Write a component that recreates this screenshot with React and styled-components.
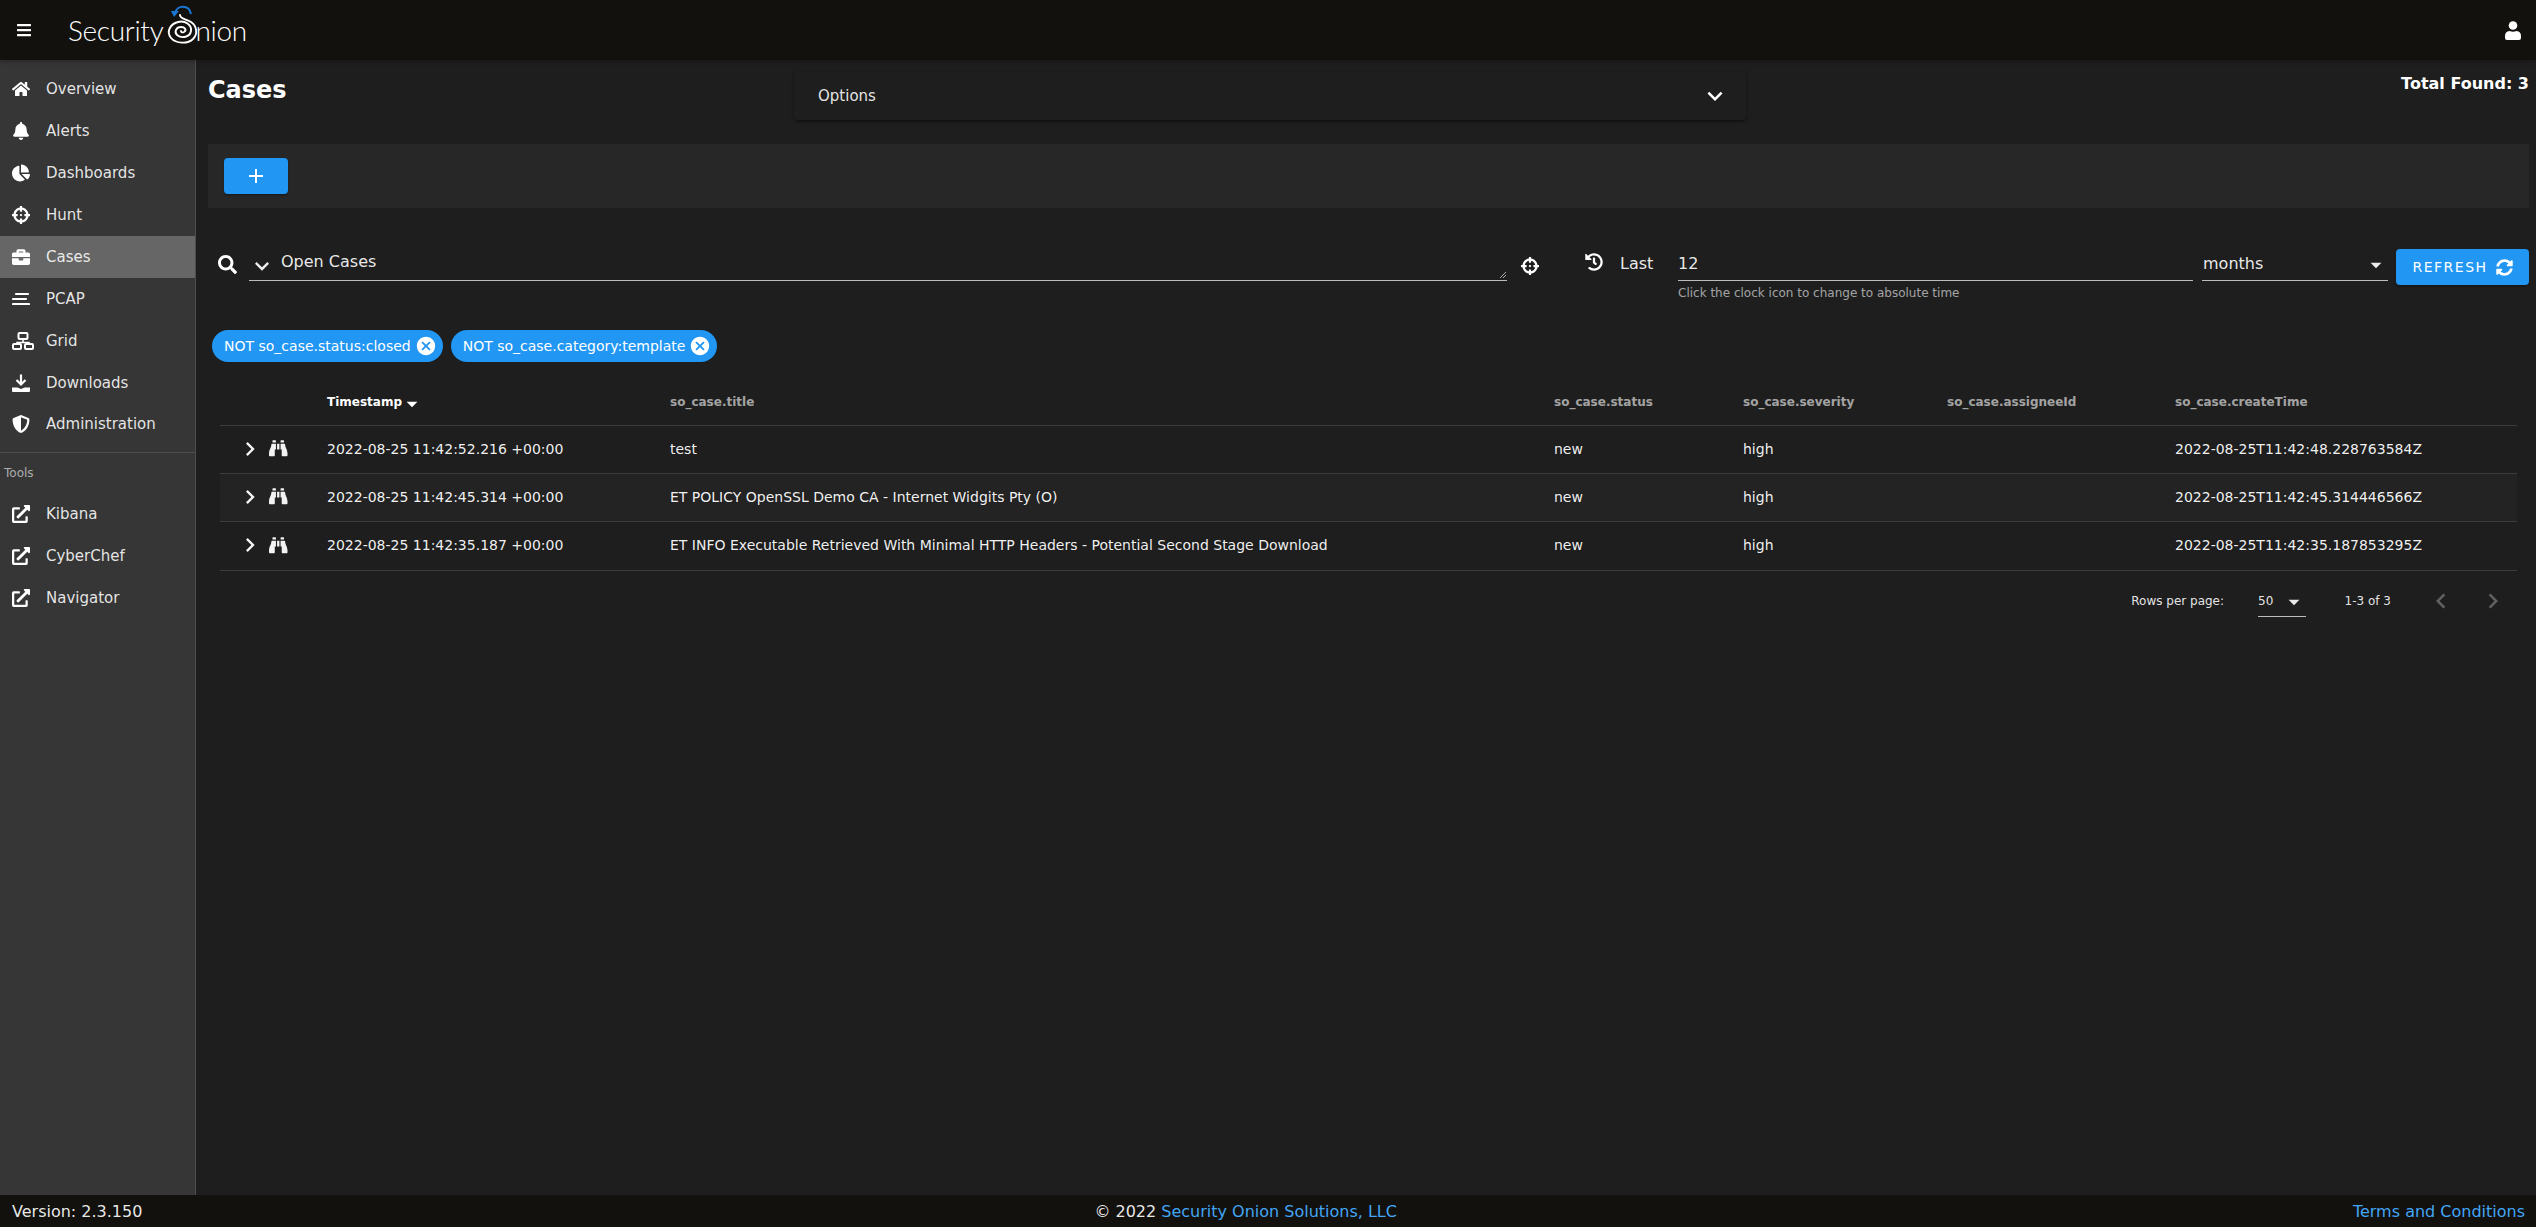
import React from 'react';
import styled, { createGlobalStyle } from 'styled-components';
import {
  FaBars, FaHome, FaBell, FaChartPie, FaCrosshairs, FaBriefcase, FaShieldAlt,
  FaExternalLinkAlt, FaSearch, FaHistory, FaSyncAlt, FaBinoculars
} from 'react-icons/fa';
import { MdAdd, MdArrowDropDown, MdCancel, MdKeyboardArrowDown, MdKeyboardArrowRight, MdKeyboardArrowLeft } from 'react-icons/md';

const GlobalStyle = createGlobalStyle`
  html, body {
    margin: 0;
    height: 100%;
    background: #1e1e1e;
    color: #fff;
    font-family: "DejaVu Sans", sans-serif;
  }
  * { box-sizing: border-box; }
`;

const Page = styled.div`
  display: grid;
  grid-template-rows: 60px 1fr 32px;
  height: 100vh;
  overflow: hidden;
`;

const Header = styled.header`
  display: flex;
  align-items: center;
  justify-content: space-between;
  padding: 0 15px 0 16px;
  background: #12110d;
  box-shadow: 0 2px 4px rgba(0, 0, 0, 0.25);
  z-index: 1;
`;

const Brand = styled.div`
  display: flex;
  align-items: center;
  gap: 36px;
`;

const Logo = styled.div`
  display: flex;
  align-items: flex-start;
  height: 50px;
  margin-top: -2px;
  font-family: Lato, sans-serif;
  font-weight: 300;
  font-size: 28px;
  letter-spacing: -0.3px;
  line-height: 52px;
  color: #fff;
  svg { margin: 0 -5px 0 3px; }
`;

const Body = styled.div`
  display: flex;
  min-height: 0;
`;

const Sidebar = styled.nav`
  width: 196px;
  flex: none;
  padding-top: 8px;
  background: #363636;
  border-right: 1px solid #4d4d4d;
`;

const NavItem = styled.div`
  display: flex;
  align-items: center;
  height: ${p => p.$short ? 40 : 42}px;
  padding-left: 12px;
  font-size: 15px;
  color: rgba(255, 255, 255, 0.88);
  background: ${p => p.$active ? '#666' : 'transparent'};
`;

const NavIcon = styled.span`
  display: flex;
  align-items: center;
  width: 34px;
  font-size: 18px;
  color: #fff;
`;

const NavDivider = styled.hr`
  margin: 8px 0 0;
  border: 0;
  border-top: 1px solid #4d4d4d;
`;

const NavHeading = styled.div`
  padding: 13px 0 13px 4px;
  font-size: 12px;
  line-height: 14px;
  color: rgba(255, 255, 255, 0.6);
`;

const Main = styled.main`
  flex: 1;
  min-width: 0;
  padding: 0 7px 0 12px;
`;

const TitleRow = styled.div`
  display: grid;
  grid-template-columns: 586px 952px 1fr;
  height: 84px;
`;

const Title = styled.h1`
  margin: 14px 0 0;
  font-size: 24px;
  line-height: 32px;
  font-weight: 700;
`;

const OptionsPanel = styled.div`
  display: flex;
  align-items: center;
  justify-content: space-between;
  height: 48px;
  margin-top: 12px;
  padding: 0 16px 0 24px;
  font-size: 15px;
  border-radius: 4px;
  background: #1e1e1e;
  color: rgba(255, 255, 255, 0.9);
  box-shadow: 0 2px 3px -1px rgba(0, 0, 0, 0.5), 0 1px 4px 0 rgba(0, 0, 0, 0.2);
  svg { font-size: 30px; color: #fff; }
`;

const Total = styled.div`
  margin-top: 14px;
  text-align: right;
  font-size: 16px;
  line-height: 20px;
  font-weight: 700;
`;

const Toolbar = styled.div`
  display: flex;
  align-items: center;
  height: 64px;
  padding-left: 16px;
  background: #272727;
`;

const BlueButton = styled.button`
  display: flex;
  align-items: center;
  justify-content: center;
  height: 36px;
  padding: 0;
  border: 0;
  border-radius: 4px;
  background: #2196f3;
  color: #fff;
  font-family: inherit;
  box-shadow: 0 3px 1px -2px rgba(0, 0, 0, 0.2), 0 2px 2px 0 rgba(0, 0, 0, 0.14);
`;

const AddButton = styled(BlueButton)`
  width: 64px;
  font-size: 24px;
`;

const QueryRow = styled.div`
  display: flex;
  align-items: flex-start;
  height: 81px;
  margin-top: 41px;
  padding-left: 10px;
`;

const SearchIcon = styled(FaSearch)`
  flex: none;
  width: 19px;
  height: 19px;
  margin: 6px 12px 0 0;
`;

const QueryField = styled.div`
  position: relative;
  display: flex;
  align-items: flex-start;
  width: 1258px;
  height: 32px;
  padding-top: 1px;
  border-bottom: 1px solid rgba(255, 255, 255, 0.7);
  font-size: 16px;
  line-height: 24px;
  color: rgba(255, 255, 255, 0.92);
  svg.caret { font-size: 28px; margin: 2px 5px 0 -1px; flex: none; }
`;

const Resizer = styled.svg`
  position: absolute;
  right: 0;
  bottom: 1px;
`;

const TargetIcon = styled(FaCrosshairs)`
  flex: none;
  width: 18px;
  height: 18px;
  margin: 8px 0 0 14px;
`;

const ClockIcon = styled(FaHistory)`
  flex: none;
  width: 18px;
  height: 18px;
  margin: 4px 0 0 46px;
`;

const LastLabel = styled.span`
  width: 58px;
  margin: 6px 0 0 17px;
  font-size: 16px;
  line-height: 18px;
  color: rgba(255, 255, 255, 0.92);
`;

const TimeField = styled.div`
  width: 515px;
`;

const Underlined = styled.div`
  height: 32px;
  padding-top: 6px;
  border-bottom: 1px solid rgba(255, 255, 255, 0.7);
  font-size: 16px;
  line-height: 18px;
  color: rgba(255, 255, 255, 0.92);
`;

const Hint = styled.div`
  margin-top: 5px;
  font-size: 12px;
  line-height: 14px;
  color: rgba(255, 255, 255, 0.6);
`;

const UnitSelect = styled(Underlined)`
  display: flex;
  justify-content: space-between;
  width: 186px;
  margin: 0 8px 0 9px;
  padding-left: 1px;
  svg { font-size: 26px; margin: -3px -1px 0 0; }
`;

const RefreshButton = styled(BlueButton)`
  gap: 8px;
  width: 133px;
  font-size: 14px;
  letter-spacing: 1.5px;
  svg { font-size: 17px; }
`;

const Chips = styled.div`
  display: flex;
  gap: 8px;
  height: 32px;
  padding-left: 4px;
`;

const Chip = styled.div`
  display: flex;
  align-items: center;
  justify-content: space-between;
  height: 32px;
  padding: 0 6px 0 12px;
  border-radius: 16px;
  background: #2196f3;
  color: #fff;
  font-size: 14px;
  white-space: nowrap;
  svg { font-size: 22px; margin-left: 4px; }
`;

const Table = styled.div`
  margin: 0 12px;
`;

const Row = styled.div`
  display: grid;
  grid-template-columns: 107px 343px 884px 189px 204px 228px 1fr;
  align-items: center;
  height: ${p => p.$last ? 49 : 48}px;
  padding-bottom: 2px;
  border-bottom: 1px solid #3c3c3c;
  font-size: 14px;
  color: rgba(255, 255, 255, 0.95);
  background: ${p => p.$shade ? '#232323' : 'transparent'};
`;

const HeadRow = styled(Row)`
  height: 64px;
  padding: 16px 0 0;
  font-size: 12px;
  font-weight: 700;
  color: rgba(255, 255, 255, 0.6);
`;

const HeadCell = styled.div`
  display: flex;
  align-items: center;
  color: ${p => p.$sorted ? '#fff' : 'inherit'};
  svg { font-size: 26px; margin: 5px 0 0 -3px; }
`;

const RowIcons = styled.div`
  display: flex;
  align-items: center;
  padding-left: 16px;
  svg.expand { font-size: 28px; margin-right: 5px; }
  svg.view { font-size: 18.5px; }
`;

const Pager = styled.div`
  display: flex;
  align-items: center;
  justify-content: flex-end;
  height: 59px;
  padding: 0 9.5px 0 0;
  font-size: 12px;
  color: rgba(255, 255, 255, 0.9);
`;

const PerPage = styled.div`
  display: flex;
  align-items: center;
  justify-content: space-between;
  width: 48px;
  height: 32px;
  margin: 0 38.5px 0 34px;
  padding-top: 2px;
  border-bottom: 1px solid rgba(255, 255, 255, 0.7);
  svg { font-size: 26px; margin: 2px -1px 0 0; }
`;

const PageArrow = styled.span`
  display: flex;
  font-size: 30px;
  margin-left: ${p => p.$gap}px;
  color: rgba(255, 255, 255, 0.3);
`;

const Footer = styled.footer`
  display: flex;
  align-items: center;
  justify-content: space-between;
  padding: 0 11px 0 12px;
  background: #12110d;
  font-size: 16px;
  color: rgba(255, 255, 255, 0.92);
  z-index: 1;
`;

const Copyright = styled.span`
  margin-right: 4px;
`;

const FooterLink = styled.a`
  color: #42a5f5;
  text-decoration: none;
`;

// icons the packages don't have in this thin style
const PcapIcon = () => (
  <svg width="18" height="14" viewBox="0 0 18 14" fill="none" stroke="#fff" strokeWidth="2.2" strokeLinecap="round">
    <path d="M4 2 H16 M1 7 H14 M1 12 H17" />
  </svg>
);

const GridIcon = () => (
  <svg width="22" height="18" viewBox="0 0 22 18" fill="none" stroke="#fff" strokeWidth="2">
    <rect x="6.5" y="1" width="9" height="6" rx="1" />
    <path d="M11 7 V10.5 M5 13 V10.5 H17 V13" strokeWidth="1.6" />
    <rect x="1" y="12" width="8" height="5" rx="1" />
    <rect x="13" y="12" width="8" height="5" rx="1" />
  </svg>
);

const DownloadIcon = () => (
  <svg width="18" height="18" viewBox="0 0 18 18">
    <path d="M9 0.5 V10 M4.5 6 L9 10.5 L13.5 6" fill="none" stroke="#fff" strokeWidth="2.2" />
    <path d="M0 13.5 H5.5 L9 15 L12.5 13.5 H18 V17 Q18 18 17 18 H1 Q0 18 0 17 Z" fill="#fff" />
  </svg>
);

const UserIcon = () => (
  <svg width="16" height="19" viewBox="0 0 16 19" fill="#fff">
    <circle cx="8" cy="4.5" r="4.3" />
    <path d="M4.5 10 Q8 11.5 11.5 10 Q16 10.5 16 15 V17 Q16 19 14 19 H2 Q0 19 0 17 V15 Q0 10.5 4.5 10 Z" />
  </svg>
);

const mainNav = [
  { label: 'Overview', icon: <FaHome /> },
  { label: 'Alerts', icon: <FaBell /> },
  { label: 'Dashboards', icon: <FaChartPie /> },
  { label: 'Hunt', icon: <FaCrosshairs /> },
  { label: 'Cases', icon: <FaBriefcase />, active: true },
  { label: 'PCAP', icon: <PcapIcon /> },
  { label: 'Grid', icon: <GridIcon /> },
  { label: 'Downloads', icon: <DownloadIcon /> },
  { label: 'Administration', icon: <FaShieldAlt />, short: true }
];

const tools = ['Kibana', 'CyberChef', 'Navigator'];

const columns = ['so_case.title', 'so_case.status', 'so_case.severity', 'so_case.assigneeId', 'so_case.createTime'];

const cases = [
  { time: '2022-08-25 11:42:52.216 +00:00', title: 'test', created: '2022-08-25T11:42:48.228763584Z' },
  { time: '2022-08-25 11:42:45.314 +00:00', title: 'ET POLICY OpenSSL Demo CA - Internet Widgits Pty (O)', created: '2022-08-25T11:42:45.314446566Z' },
  { time: '2022-08-25 11:42:35.187 +00:00', title: 'ET INFO Executable Retrieved With Minimal HTTP Headers - Potential Second Stage Download', created: '2022-08-25T11:42:35.187853295Z' }
];

const Spiral = () => (
  <svg width="34" height="44" viewBox="0 0 34 44" fill="none">
    <path d="M9 9 C11 1 23 0 25 10" stroke="#1976d2" strokeWidth="2" />
    <path d="M5 7 L13 7 L8 13 Z" fill="#1976d2" />
    <path
      d="M14 11 C14 15 20 15 25 18 C31 22 32 30 27 35 C22 40 10 40 5 34 C0 28 4 20 12 18 C19 16 26 21 25 27 C24 33 16 35 11 31 C8 28 10 23 15 23 C19 23 21 26 18 28 C16 29 15 28 15 27"
      stroke="#fff"
      strokeWidth="1.9"
      strokeLinecap="round"
    />
  </svg>
);

const App = () => (
  <Page>
    <GlobalStyle />
    <Header>
      <Brand>
        <FaBars size={16} />
        <Logo>Security<Spiral />nion</Logo>
      </Brand>
      <UserIcon />
    </Header>
    <Body>
      <Sidebar>
        {mainNav.map(item => (
          <NavItem key={item.label} $active={item.active} $short={item.short}>
            <NavIcon>{item.icon}</NavIcon>
            {item.label}
          </NavItem>
        ))}
        <NavDivider />
        <NavHeading>Tools</NavHeading>
        {tools.map(tool => (
          <NavItem key={tool}>
            <NavIcon><FaExternalLinkAlt /></NavIcon>
            {tool}
          </NavItem>
        ))}
      </Sidebar>
      <Main>
        <TitleRow>
          <Title>Cases</Title>
          <OptionsPanel>
            Options
            <MdKeyboardArrowDown />
          </OptionsPanel>
          <Total>Total Found: 3</Total>
        </TitleRow>
        <Toolbar>
          <AddButton><MdAdd /></AddButton>
        </Toolbar>
        <QueryRow>
          <SearchIcon />
          <QueryField>
            <MdKeyboardArrowDown className="caret" />
            Open Cases
            <Resizer width="8" height="8" viewBox="0 0 8 8">
              <path d="M1 7 L7 1 M4 7 L7 4" stroke="#aaa" strokeWidth="1" />
            </Resizer>
          </QueryField>
          <TargetIcon />
          <ClockIcon />
          <LastLabel>Last</LastLabel>
          <TimeField>
            <Underlined>12</Underlined>
            <Hint>Click the clock icon to change to absolute time</Hint>
          </TimeField>
          <UnitSelect>
            months
            <MdArrowDropDown />
          </UnitSelect>
          <RefreshButton>REFRESH <FaSyncAlt /></RefreshButton>
        </QueryRow>
        <Chips>
          <Chip>NOT so_case.status:closed <MdCancel /></Chip>
          <Chip>NOT so_case.category:template <MdCancel /></Chip>
        </Chips>
        <Table>
          <HeadRow>
            <div />
            <HeadCell $sorted>Timestamp <MdArrowDropDown /></HeadCell>
            {columns.map(col => <HeadCell key={col}>{col}</HeadCell>)}
          </HeadRow>
          {cases.map((c, i) => (
            <Row key={c.time} $shade={i === 1} $last={i === cases.length - 1}>
              <RowIcons>
                <MdKeyboardArrowRight className="expand" />
                <FaBinoculars className="view" />
              </RowIcons>
              <div>{c.time}</div>
              <div>{c.title}</div>
              <div>new</div>
              <div>high</div>
              <div />
              <div>{c.created}</div>
            </Row>
          ))}
          <Pager>
            Rows per page:
            <PerPage>50 <MdArrowDropDown /></PerPage>
            1-3 of 3
            <PageArrow $gap={34.5}><MdKeyboardArrowLeft /></PageArrow>
            <PageArrow $gap={22}><MdKeyboardArrowRight /></PageArrow>
          </Pager>
        </Table>
      </Main>
    </Body>
    <Footer>
      <span>Version: 2.3.150</span>
      <Copyright>© 2022 <FooterLink>Security Onion Solutions, LLC</FooterLink></Copyright>
      <FooterLink>Terms and Conditions</FooterLink>
    </Footer>
  </Page>
);

export default App;
